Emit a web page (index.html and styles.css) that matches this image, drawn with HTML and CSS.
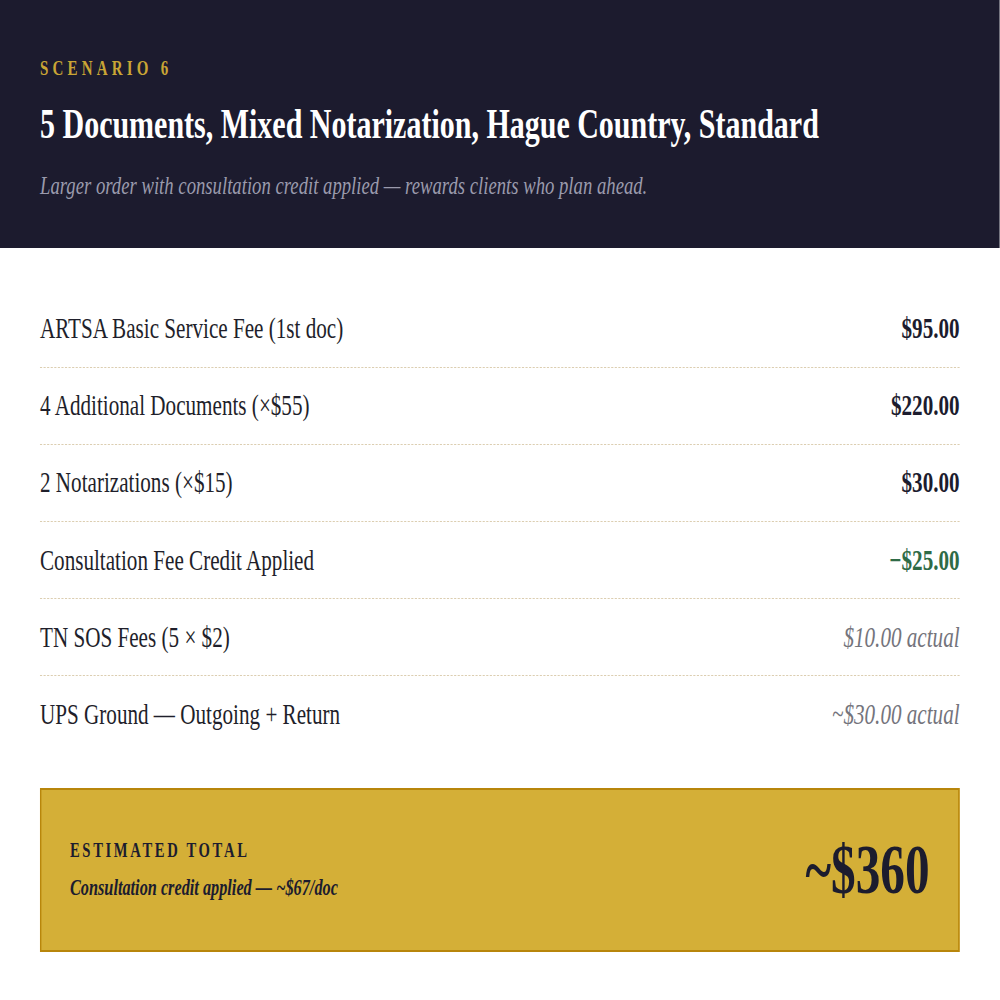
FILE: index.html
```html
<!DOCTYPE html>
<html lang="en">
<head>
<meta charset="utf-8">
<title>Scenario 6</title>
<link rel="stylesheet" href="styles.css">
</head>
<body>
<div class="frame">
<div class="page">
  <header class="hero">
    <p class="eyebrow">Scenario 6</p>
    <h1 class="title">5 Documents, Mixed Notarization, Hague Country, Standard</h1>
    <p class="subtitle">Larger order with consultation credit applied — rewards clients who plan ahead.</p>
  </header>
  <main class="breakdown">
    <ul class="lines">
      <li class="line"><span class="label">ARTSA Basic Service Fee (1st doc)</span><span class="amount">$95.00</span></li>
      <li class="line"><span class="label">4 Additional Documents (×$55)</span><span class="amount">$220.00</span></li>
      <li class="line"><span class="label">2 Notarizations (×$15)</span><span class="amount">$30.00</span></li>
      <li class="line"><span class="label">Consultation Fee Credit Applied</span><span class="amount credit">−$25.00</span></li>
      <li class="line"><span class="label">TN SOS Fees (5 × $2)</span><span class="amount actual">$10.00 actual</span></li>
      <li class="line"><span class="label">UPS Ground — Outgoing + Return</span><span class="amount actual">~$30.00 actual</span></li>
    </ul>
    <div class="total">
      <div class="total-text">
        <div class="total-label">Estimated Total</div>
        <div class="total-note">Consultation credit applied — ~$67/doc</div>
      </div>
      <div class="total-amount">~$360</div>
    </div>
  </main>
</div>
</div>
</body>
</html>
```
FILE: styles.css
```css
html, body {
  margin: 0;
  padding: 0;
  background: #ffffff;
  overflow: hidden;
}

body {
  font-family: "Liberation Serif", "Times New Roman", serif;
  color: #1c1c2e;
}

.frame {
  width: 1000px;
  overflow: hidden;
}

.page {
  width: 1400px;
  transform: scaleX(0.714);
  transform-origin: 0 0;
}

.hero {
  background: #1c1b2e;
  padding: 56px 56px 43px;
}

.eyebrow {
  margin: 0;
  font-size: 21px;
  line-height: 24px;
  font-weight: 700;
  letter-spacing: 0.28em;
  text-transform: uppercase;
  color: #c9a535;
}

.title {
  margin: 19px 0 0;
  font-size: 42px;
  line-height: 50.4px;
  font-weight: 700;
  color: #ffffff;
}

.subtitle {
  margin: 17px 0 0;
  font-size: 26.2px;
  line-height: 39px;
  font-style: italic;
  color: #9a9aac;
}

.breakdown {
  padding: 42px 56px 0;
}

.lines {
  list-style: none;
  margin: 0;
  padding: 0;
}

.line {
  display: flex;
  justify-content: space-between;
  align-items: baseline;
  padding: 16.5px 0;
  font-size: 29.6px;
  line-height: 43.2px;
  border-bottom: 1px dashed #d6c6a4;
}

.line:last-child {
  border-bottom: none;
}

.label {
  color: #1f1f2b;
}

.amount {
  font-weight: 700;
  color: #1c1c2e;
}

.amount.credit {
  color: #2f6b47;
}

.amount.actual {
  font-weight: 400;
  font-style: italic;
  color: #74747c;
}

.total {
  margin-top: 35px;
  display: flex;
  justify-content: space-between;
  align-items: center;
  padding: 41px 40px;
  background: #d4af37;
  border: 2px solid #b8860b;
}

.total-label {
  font-size: 20.5px;
  line-height: 24px;
  font-weight: 700;
  letter-spacing: 0.18em;
  text-transform: uppercase;
  color: #1c1c2e;
}

.total-note {
  margin-top: 11px;
  font-size: 22.8px;
  line-height: 29px;
  font-weight: 700;
  font-style: italic;
  color: #1c1c2e;
}

.total-amount {
  font-size: 69px;
  line-height: 78px;
  font-weight: 700;
  color: #1c1c2e;
}
```
